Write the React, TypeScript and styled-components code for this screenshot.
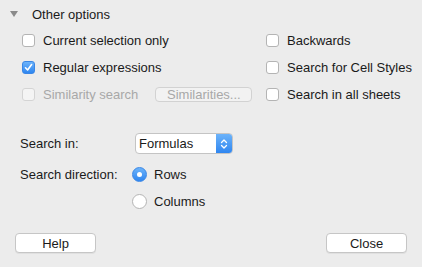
import React from 'react';
import styled, { createGlobalStyle } from 'styled-components';

const GlobalStyle = createGlobalStyle`
  html, body {
    margin: 0;
    padding: 0;
    background: #ececec;
  }
  body {
    font-family: 'Liberation Sans', Arial, sans-serif;
    font-size: 13px;
    color: #1a1a1a;
  }
`;

const Dialog = styled.div`
  width: 422px;
  height: 267px;
  box-sizing: border-box;
  display: flex;
  flex-direction: column;
  background: #ececec;
`;

const Expander = styled.div`
  display: flex;
  align-items: center;
  gap: 14px;
  padding: 7px 0 0 10px;
  height: 14px;
`;

const Triangle = styled.span`
  width: 0;
  height: 0;
  border-left: 4px solid transparent;
  border-right: 4px solid transparent;
  border-top: 6px solid #8a8a8a;
`;

const OptionsGrid = styled.div`
  display: grid;
  grid-template-columns: 244px 1fr;
  grid-auto-rows: 27px;
  padding: 6px 0 0 22px;
`;

const Option = styled.label<{ $disabled?: boolean }>`
  display: flex;
  align-items: center;
  gap: 8px;
  color: ${(p) => (p.$disabled ? '#a8a8a8' : '#1a1a1a')};
  white-space: nowrap;
`;

const Box = styled.span<{ $checked?: boolean; $disabled?: boolean }>`
  width: 13px;
  height: 13px;
  box-sizing: border-box;
  border-radius: 3px;
  display: inline-flex;
  align-items: center;
  justify-content: center;
  flex-shrink: 0;
  background: ${(p) =>
    p.$checked ? 'linear-gradient(#6cb3fa, #2f86f0)' : p.$disabled ? '#f4f4f4' : '#ffffff'};
  border: 1px solid ${(p) => (p.$checked ? '#3a87e6' : p.$disabled ? '#d4d4d4' : '#b4b4b4')};
`;

const SmallButton = styled.span`
  margin-left: 9px;
  height: 15px;
  width: 97px;
  box-sizing: border-box;
  border: 1px solid #d2d2d2;
  border-radius: 4px;
  background: #f2f2f2;
  color: #a8a8a8;
  display: inline-flex;
  align-items: center;
  justify-content: center;
`;

const FormGrid = styled.div`
  display: grid;
  grid-template-columns: 112px auto;
  row-gap: 7px;
  padding: 25px 0 0 20px;
  align-items: start;
`;

const Label = styled.span<{ $line: number }>`
  white-space: nowrap;
  line-height: ${(p) => p.$line}px;
`;

const Select = styled.div`
  width: 98px;
  height: 21px;
  margin-left: 3px;
  box-sizing: border-box;
  border: 1px solid #c4c4c4;
  border-radius: 4px;
  background: #fff;
  display: flex;
  align-items: center;
  overflow: hidden;
`;

const SelectText = styled.span`
  flex: 1;
  padding-left: 3px;
`;

const SelectArrows = styled.span`
  width: 16px;
  height: 100%;
  background: linear-gradient(#6cb3fa, #2f86f0);
  display: flex;
  align-items: center;
  justify-content: center;
`;

const RadioGroup = styled.div`
  display: flex;
  flex-direction: column;
`;

const RadioRow = styled.label`
  display: flex;
  align-items: center;
  gap: 7px;
  height: 27px;
`;

const Radio = styled.span<{ $checked?: boolean }>`
  width: 15px;
  height: 15px;
  box-sizing: border-box;
  border-radius: 50%;
  display: inline-flex;
  align-items: center;
  justify-content: center;
  background: ${(p) => (p.$checked ? 'linear-gradient(#6cb3fa, #2f86f0)' : '#fff')};
  border: 1px solid ${(p) => (p.$checked ? '#3a87e6' : '#b4b4b4')};
  &::after {
    content: '';
    display: ${(p) => (p.$checked ? 'block' : 'none')};
    width: 5px;
    height: 5px;
    border-radius: 50%;
    background: #fff;
  }
`;

const Footer = styled.div`
  margin-top: auto;
  display: flex;
  justify-content: space-between;
  padding: 0 15px 14px 15px;
`;

const PushButton = styled.button`
  width: 81px;
  height: 20px;
  box-sizing: border-box;
  border: 1px solid #c6c6c6;
  border-radius: 4px;
  background: #fff;
  font-family: 'Liberation Sans', Arial, sans-serif;
  font-size: 13px;
  color: #1a1a1a;
  padding: 0;
  box-shadow: 0 1px 0 rgba(0, 0, 0, 0.05);
`;

const Check = () => (
  <svg width="9" height="9" viewBox="0 0 9 9">
    <path d="M1.5 4.8 L3.6 7 L7.6 1.6" fill="none" stroke="#fff" strokeWidth="1.6" strokeLinecap="round" strokeLinejoin="round" />
  </svg>
);

const Arrows = () => (
  <svg width="8" height="12" viewBox="0 0 8 12">
    <path d="M1.5 4.5 L4 2 L6.5 4.5 M1.5 7.5 L4 10 L6.5 7.5" fill="none" stroke="#fff" strokeWidth="1.3" strokeLinecap="round" strokeLinejoin="round" />
  </svg>
);

const CheckOption = ({ label, checked, disabled }: { label: string; checked?: boolean; disabled?: boolean }) => (
  <Option $disabled={disabled}>
    <Box $checked={checked} $disabled={disabled}>{checked && <Check />}</Box>
    {label}
  </Option>
);

const App = () => {
  return (
    <Dialog>
      <GlobalStyle />
      <Expander>
        <Triangle />
        <span>Other options</span>
      </Expander>
      <OptionsGrid>
        <CheckOption label="Current selection only" />
        <CheckOption label="Backwards" />
        <CheckOption label="Regular expressions" checked />
        <CheckOption label="Search for Cell Styles" />
        <Option $disabled>
          <Box $disabled />
          Similarity search
          <SmallButton>Similarities...</SmallButton>
        </Option>
        <CheckOption label="Search in all sheets" />
      </OptionsGrid>
      <FormGrid>
        <Label $line={21}>Search in:</Label>
        <Select>
          <SelectText>Formulas</SelectText>
          <SelectArrows>
            <Arrows />
          </SelectArrows>
        </Select>
        <Label $line={27}>Search direction:</Label>
        <RadioGroup>
          <RadioRow>
            <Radio $checked />
            Rows
          </RadioRow>
          <RadioRow>
            <Radio />
            Columns
          </RadioRow>
        </RadioGroup>
      </FormGrid>
      <Footer>
        <PushButton>Help</PushButton>
        <PushButton>Close</PushButton>
      </Footer>
    </Dialog>
  );
};

export default App;
